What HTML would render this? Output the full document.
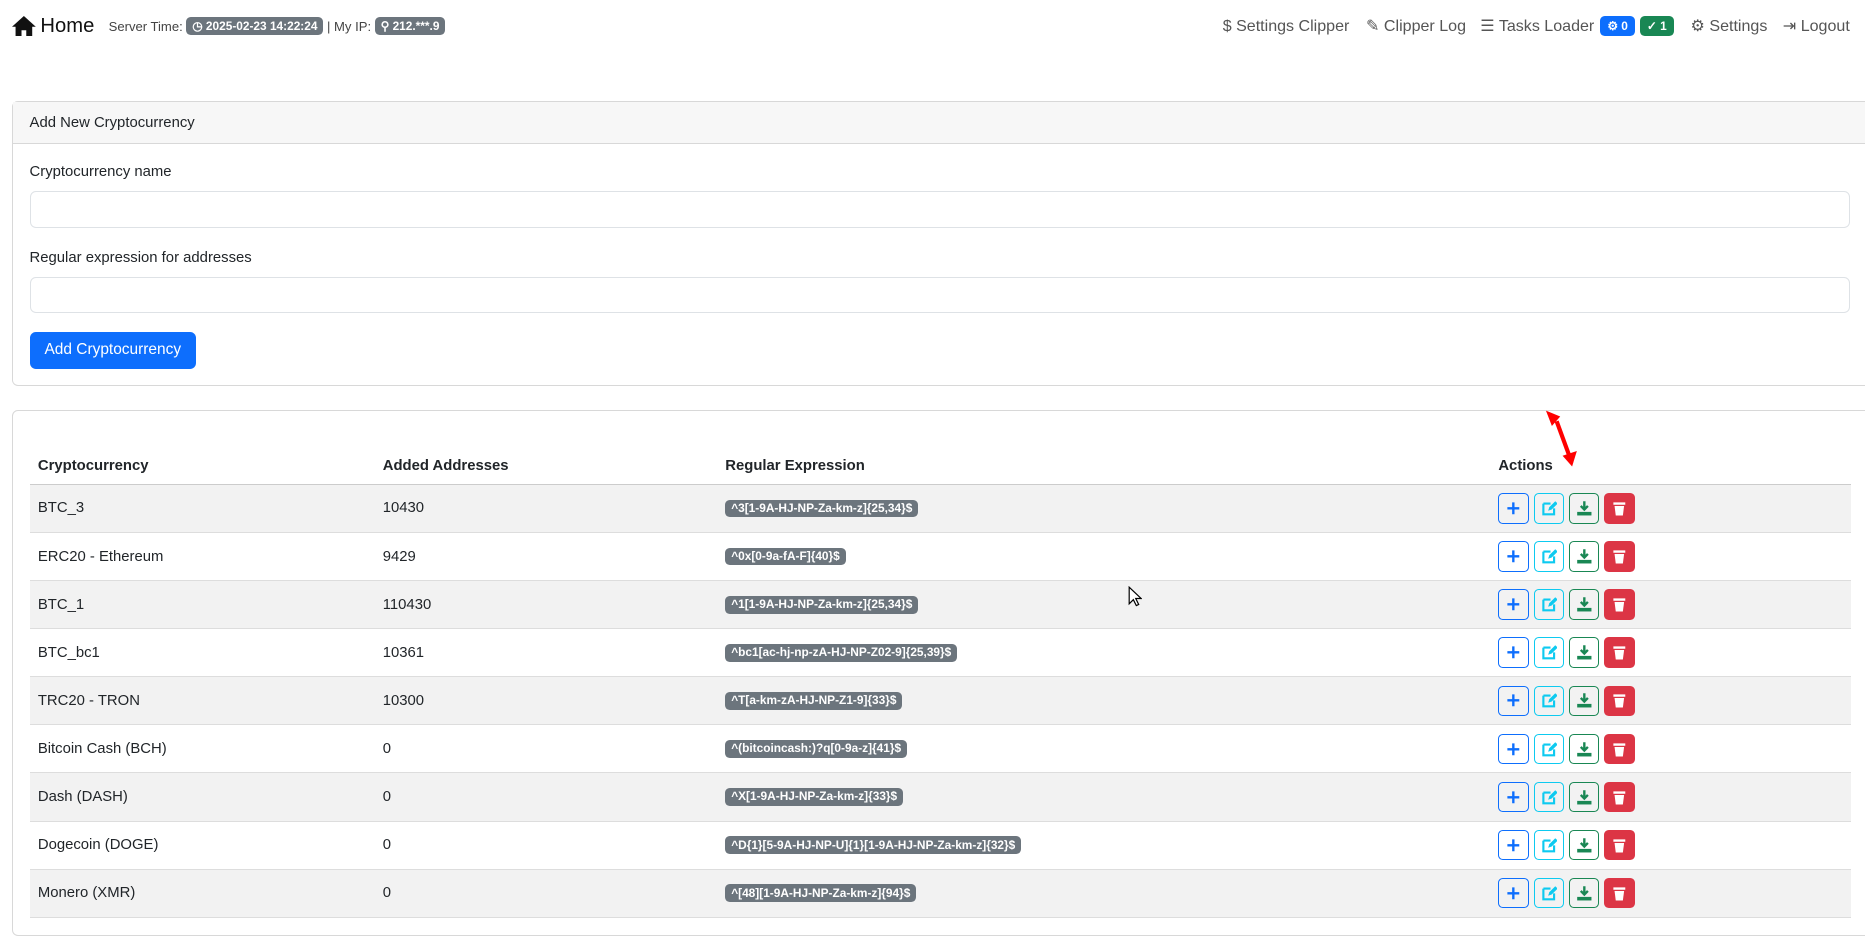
<!DOCTYPE html>
<html><head><meta charset="utf-8"><style>
html{zoom:1.18941}
body{margin:0;width:1568px;height:769px;overflow:hidden;font-family:"Liberation Sans",sans-serif;color:#212529;background:#fff;position:relative;font-size:12.5px}
.abs{position:absolute}
.nav{top:10px;height:24px;display:flex;align-items:center}
.badge{display:inline-block;background:#6c757d;color:#fff;font-weight:bold;font-size:10px;border-radius:4px;padding:2px 5px;line-height:11px;vertical-align:middle}
.rl{color:#555;font-size:13.5px;display:flex;align-items:center}
.card{position:absolute;left:10px;width:1570px;border:1px solid #d8d8d8;border-radius:5px;background:#fff}
.input{position:absolute;left:14px;width:1529px;height:29px;border:1px solid #dee2e6;border-radius:5px}
table{border-collapse:collapse;position:absolute;left:14px;width:1531px}
td,th{text-align:left;padding:0 7px;height:39.6px;font-size:12.5px}
th{font-weight:bold;border-bottom:1px solid #ccc;vertical-align:bottom;padding-bottom:8px;height:26px}
tr.s td{background:#f2f2f2}
td{border-bottom:1px solid #ddd}
.b{display:inline-block;width:24px;height:24px;border:1px solid;border-radius:4px;margin-right:4px;vertical-align:middle;position:relative}
.b svg{position:absolute;left:5px;top:5px}
</style></head><body>
<div class="abs nav" style="left:10px">
<svg width="20" height="17" viewBox="0 0 20 17"><path d="M10 0L0 9h3v8h5v-5h4v5h5V9h3z" fill="#111"/></svg>
<span style="font-size:17px;margin-left:4px;color:#111">Home</span>
<span style="font-size:11px;color:#444;margin-left:12px">Server Time: </span>
<span class="badge" style="margin-left:3px">◷ 2025-02-23 14:22:24</span>
<span style="font-size:11px;color:#444;margin:0 3px">| My IP:</span>
<span class="badge">⚲ 212.***.9</span>
</div>
<div class="abs nav rl" style="left:1028px">
<span>$ Settings Clipper</span>
<span style="margin-left:14px">✎ Clipper Log</span>
<span style="margin-left:12px">☰ Tasks Loader</span>
<span class="badge" style="background:#0d6efd;margin-left:5px;font-size:10px;padding:3px 6px">⚙ 0</span>
<span class="badge" style="background:#198754;margin-left:4px;font-size:10px;padding:3px 6px">✓ 1</span>
<span style="margin-left:14px">⚙ Settings</span>
<span style="margin-left:13px">⇥ Logout</span>
</div>
<div class="card" style="top:85px;height:238px">
<div style="height:34px;background:#f7f7f7;border-bottom:1px solid #d8d8d8;line-height:36px;padding-left:14px;font-size:12.5px">Add New Cryptocurrency</div>
<div class="abs" style="left:14px;top:52px">Cryptocurrency name</div>
<div class="input" style="top:75px"></div>
<div class="abs" style="left:14px;top:124px">Regular expression for addresses</div>
<div class="input" style="top:147px"></div>
<div class="abs" style="left:14px;top:193px;width:140px;height:31px;background:#0d6efd;color:#fff;border-radius:5px;text-align:center;line-height:31px;font-size:13px">Add Cryptocurrency</div>
</div>
<div class="card" style="top:345px;height:440px">
<table style="top:27px">
<tr><th style="width:276px">Cryptocurrency</th><th style="width:274px">Added Addresses</th><th style="width:636px">Regular Expression</th><th>Actions</th></tr>
<tr class="s"><td>BTC_3</td><td>10430</td><td><span class="badge">^3[1-9A-HJ-NP-Za-km-z]{25,34}$</span></td><td>A</td></tr>
<tr><td>ERC20 - Ethereum</td><td>9429</td><td><span class="badge">^0x[0-9a-fA-F]{40}$</span></td><td>A</td></tr>
<tr class="s"><td>BTC_1</td><td>110430</td><td><span class="badge">^1[1-9A-HJ-NP-Za-km-z]{25,34}$</span></td><td>A</td></tr>
<tr><td>BTC_bc1</td><td>10361</td><td><span class="badge">^bc1[ac-hj-np-zA-HJ-NP-Z02-9]{25,39}$</span></td><td>A</td></tr>
<tr class="s"><td>TRC20 - TRON</td><td>10300</td><td><span class="badge">^T[a-km-zA-HJ-NP-Z1-9]{33}$</span></td><td>A</td></tr>
<tr><td>Bitcoin Cash (BCH)</td><td>0</td><td><span class="badge">^(bitcoincash:)?q[0-9a-z]{41}$</span></td><td>A</td></tr>
<tr class="s"><td>Dash (DASH)</td><td>0</td><td><span class="badge">^X[1-9A-HJ-NP-Za-km-z]{33}$</span></td><td>A</td></tr>
<tr><td>Dogecoin (DOGE)</td><td>0</td><td><span class="badge">^D{1}[5-9A-HJ-NP-U]{1}[1-9A-HJ-NP-Za-km-z]{32}$</span></td><td>A</td></tr>
<tr class="s"><td>Monero (XMR)</td><td>0</td><td><span class="badge">^[48][1-9A-HJ-NP-Za-km-z]{94}$</span></td><td>A</td></tr>
</table>
</div>
<svg class="abs" style="left:1295px;top:342px" width="40" height="55" viewBox="0 0 40 55"><path d="M14 12L25 42" stroke="#f00" stroke-width="3.5"/><path d="M5 3L17 8L10 16z" fill="#f00"/><path d="M19 41L31 37L27 50z" fill="#f00"/></svg>
<svg class="abs" style="left:948px;top:493px" width="12" height="18" viewBox="0 0 12 18"><path d="M1 1v14l3.5-3.5 2.5 5 2-1-2.5-5H11z" fill="#fff" stroke="#000"/></svg>
<script>
document.querySelectorAll('td:last-child').forEach(function(td){if(td.textContent==='A')td.innerHTML=
'<span class="b" style="border-color:#0d6efd"><svg width="14" height="14"><path d="M7 2v10M2 7h10" stroke="#0d6efd" stroke-width="2"/></svg></span>'+
'<span class="b" style="border-color:#0dcaf0"><svg width="14" height="14"><path d="M2 3h6M2 3v9h9V7" stroke="#0dcaf0" stroke-width="1.8" fill="none"/><path d="M6 9l1-3 5-5 2 2-5 5z" fill="#0dcaf0"/></svg></span>'+
'<span class="b" style="border-color:#198754"><svg width="14" height="14"><path d="M7 1v7M4 5l3 3 3-3" stroke="#198754" stroke-width="2" fill="none"/><rect x="1" y="10" width="12" height="3" fill="#198754"/></svg></span>'+
'<span class="b" style="border-color:#dc3545;background:#dc3545"><svg width="14" height="14"><rect x="2" y="2" width="10" height="2" fill="#fff"/><path d="M3 5h8l-1 8H4z" fill="#fff"/></svg></span>';});
</script>
</body></html>
